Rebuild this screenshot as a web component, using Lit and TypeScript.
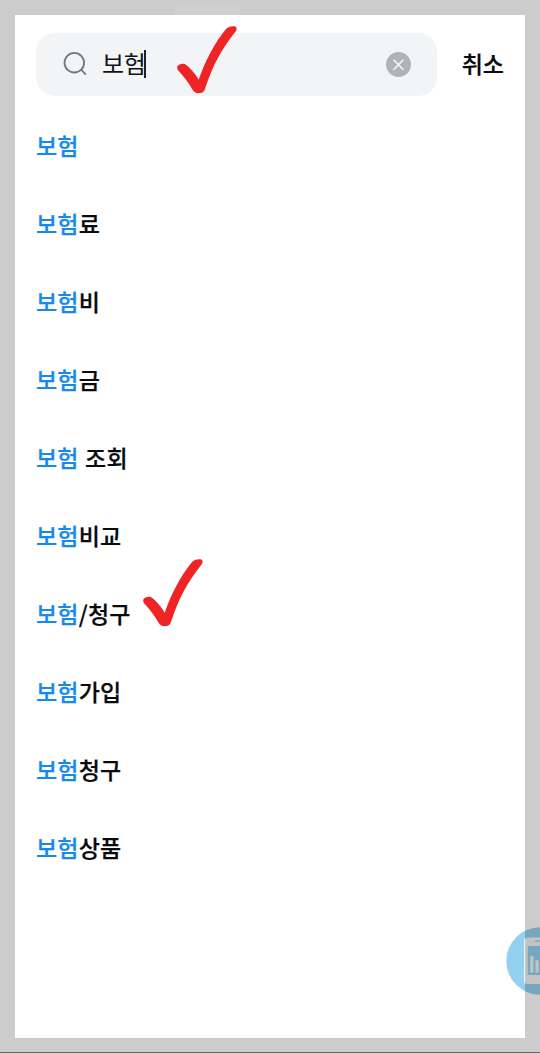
import { LitElement, html, css } from "lit";
import { customElement, property } from "lit/decorators.js";

@customElement("check-mark")
class CheckMark extends LitElement {
  static styles = css`
    :host { display: block; width: 60px; height: 68px; }
    svg { display: block; overflow: visible; }
  `;
  render() {
    return html`<svg width="60" height="68" viewBox="0 0 60 68">
      <path fill="#ee2425" d="M0.3 42.2C-0.2 39.6 2 38.3 5.5 37.8C8.3 37.5 10 39.5 12.4 41.8C15.9 45.3 18.9 49 21.7 53.8C28 35.8 37.5 16.5 49.3 2.8C51.5 0.5 54.5 -0.1 57.5 0.2C60.2 1 60.2 3.4 58.4 5.8C44.5 23 35.8 39.5 28.2 62.2C27 65.8 25.8 66.9 22.6 67.1C19 67.4 17.2 66.3 15.4 63.4C11.4 57 7.4 51 2.2 45.6C1 44.4 0.5 43.5 0.3 42.2Z"/>
    </svg>`;
  }
}

@customElement("search-bar")
class SearchBar extends LitElement {
  static styles = css`
    :host { display: flex; align-items: center; height: 63px; }
    .field {
      display: flex; align-items: center; box-sizing: border-box;
      width: 401.5px; height: 63px; padding: 0 26.5px 0 27px;
      border-radius: 19px; background: #f2f4f6;
    }
    svg { display: block; flex: none; }
    .query { margin: 0 0 3px 14px; font-size: 24px; line-height: 35px; color: #101318; letter-spacing: -0.3px; white-space: nowrap; }
    .caret { width: 2px; height: 28px; background: #222; margin-left: -1.5px; }
    .clear { margin-left: auto; }
    .cancel { margin: 0 0 3px 24.5px; font-size: 23px; line-height: 34px; font-weight: 500; color: #080a0d; white-space: nowrap; -webkit-text-stroke: 0.25px currentColor; }
  `;
  @property() query = "";
  render() {
    return html`
      <div class="field">
        <svg width="25" height="26" viewBox="0 0 25 26" fill="none" stroke="#747679" stroke-width="1.8" stroke-linecap="round">
          <circle cx="11.3" cy="11.7" r="9.8"/><path d="M18.5 19L22.4 23.2"/>
        </svg>
        <span class="query">${this.query}</span><span class="caret"></span>
        <svg class="clear" width="25" height="25" viewBox="0 0 25 25">
          <circle cx="12.5" cy="12.5" r="12.5" fill="#b0b2b5"/>
          <path d="M8 8.2L17 17.2M17 8.2L8 17.2" fill="none" stroke="#f7f8f9" stroke-width="1.6" stroke-linecap="round"/>
        </svg>
      </div>
      <span class="cancel">취소</span>
    `;
  }
}

@customElement("app-root")
class AppRoot extends LitElement {
  static styles = css`
    :host {
      display: block; position: relative; box-sizing: border-box; overflow: hidden;
      width: 540px; height: 1053px; padding: 32.5px 36px 0; background: #fff;
      font-family: "Noto Sans CJK KR", sans-serif;
    }
    .list { list-style: none; margin: 10.5px 0 0; padding: 0; }
    .item {
      display: flex; align-items: center; height: 78px; white-space: pre;
      font-size: 23px; line-height: 34px; font-weight: 500; color: #080a0d;
      letter-spacing: 0.2px; word-spacing: 1px; -webkit-text-stroke: 0.25px currentColor;
    }
    .match { color: #148af0; }
    .check { position: absolute; }
    .first { left: 177px; top: 26px; }
    .second { left: 143px; top: 559px; }
    .badge { position: absolute; left: 506px; top: 927px; display: block; }
    .frame { position: absolute; inset: 0; border: 15px solid rgba(0, 0, 0, 0.2); pointer-events: none; }
    .tab { position: absolute; left: 175px; top: 5px; width: 65px; height: 10px; background: #d0d0d0; }
    .edge { position: absolute; left: 0; right: 0; bottom: 0; height: 1px; background: #666; }
  `;

  private query = "보험";
  private endings = ["", "료", "비", "금", " 조회", "비교", "/청구", "가입", "청구", "상품"];

  render() {
    return html`
      <search-bar .query=${this.query}></search-bar>
      <ul class="list">
        ${this.endings.map((end) => html`<li class="item"><span class="match">${this.query}</span><span>${end}</span></li>`)}
      </ul>
      <svg class="badge" width="34" height="68" viewBox="0 0 34 68">
        <circle cx="34" cy="34" r="33.7" fill="#94d1f0"/>
        <rect x="18" y="10.5" width="32" height="46.5" rx="3" fill="#f4f4f4"/>
        <rect x="21.7" y="19" width="25" height="29" fill="#94d1f0"/>
        <path d="M29.5 14H40" stroke="#94d1f0" stroke-width="1.6" stroke-linecap="round"/>
        <rect x="24.2" y="28.7" width="3.3" height="17" rx="1.5" fill="#f4f4f4"/>
        <rect x="29.4" y="33" width="3.3" height="12.7" rx="1.5" fill="#f4f4f4"/>
      </svg>
      <div class="frame"></div>
      <div class="tab"></div>
      <div class="edge"></div>
      <check-mark class="check first"></check-mark>
      <check-mark class="check second"></check-mark>
    `;
  }
}
